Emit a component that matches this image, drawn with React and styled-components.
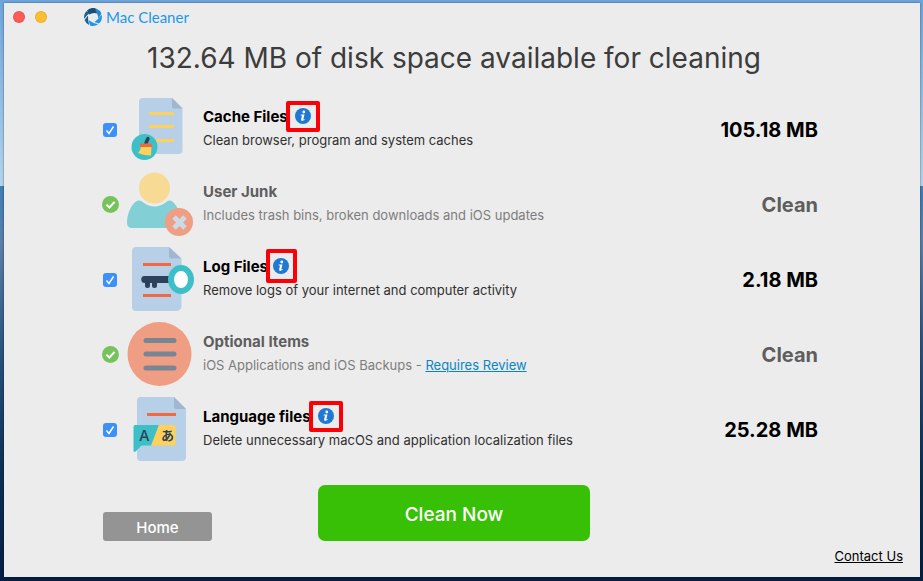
import React, { useState } from 'react';
import styled, { createGlobalStyle, css } from 'styled-components';

const GlobalStyle = createGlobalStyle`
  * {
    box-sizing: border-box;
  }

  body {
    margin: 0;
    font-family: Inter, 'Liberation Sans', sans-serif;
    color: #000;
  }
`;

const Desktop = styled.div`
  display: flex;
  min-height: 100vh;
  padding: 3px 3px 4px 4px;
  background: linear-gradient(
    to bottom,
    #6ea4dc 0,
    #b4d4ea 32%,
    #3f7eb8 32%,
    #5b7fa8 42%,
    #2c527e 60%,
    #0d3157 80%,
    #041f42 100%
  );
`;

const Window = styled.main`
  flex: 1;
  display: flex;
  flex-direction: column;
  background: #ececec;
  box-shadow: 0 0 2px rgba(0, 0, 0, 0.5);
`;

const TitleBar = styled.header`
  display: flex;
  align-items: center;
  height: 28px;
  padding-left: 9px;
`;

const WindowButton = styled.button`
  width: 12px;
  height: 12px;
  margin-right: 10px;
  padding: 0;
  border: 1px solid rgba(0, 0, 0, 0.08);
  border-radius: 50%;
  background: ${({ $color }) => $color};
`;

const Brand = styled.div`
  display: flex;
  align-items: center;
  gap: 4px;
  margin-left: 27px;
  font-family: Lato, sans-serif;
  font-size: 15px;
  color: #1d97ea;
`;

const Content = styled.section`
  padding: 0 102px 0 86px;
`;

const Heading = styled.h1`
  margin: 0;
  padding: 7px 0 14px;
  font-size: 28px;
  line-height: 40px;
  font-weight: 400;
  text-align: center;
  color: #3c3c3c;
`;

const List = styled.ul`
  margin: 0;
  padding: 0;
  list-style: none;
`;

const Row = styled.li`
  display: grid;
  grid-template-columns: 32px 68px 1fr auto;
  align-items: center;
  height: 75px;
  padding-left: 4px;
`;

const Status = styled.div`
  display: grid;
  place-items: center;

  > * {
    grid-area: 1 / 1;
  }

  svg {
    pointer-events: none;
  }
`;

const Checkbox = styled.input`
  appearance: none;
  width: 14px;
  height: 14px;
  margin: 0;
  border-radius: 3px;
  background: #3b90fb;

  &:not(:checked) {
    border: 1px solid #b0b0b0;
    background: #fff;
  }
`;

const Picture = styled.svg`
  display: block;
  width: 68px;
  height: 75px;
  opacity: ${({ $faded }) => ($faded ? 0.6 : 1)};
`;

const Info = styled.div`
  padding: 0 0 3px 9px;
`;

const NameLine = styled.div`
  display: flex;
  align-items: center;
  height: 24px;
`;

const Name = styled.label`
  font-size: 15px;
  font-weight: 700;
  color: ${({ $muted }) => ($muted ? '#5e5e5e' : '#000')};
`;

const Description = styled.p`
  margin: 0;
  font-size: 13px;
  line-height: 24px;
  color: ${({ $muted }) => ($muted ? '#7d7d7d' : '#303030')};
`;

const ReviewLink = styled.a`
  color: #0a84c8;
`;

const InfoButton = styled.button`
  display: grid;
  flex: none;
  place-items: center;
  width: 34px;
  height: 31px;
  margin-left: -2px;
  padding: 0;
  border: 4px solid #fb0007;
  border-radius: 2px;
  background: none;

  ${({ $tall }) =>
    $tall &&
    css`
      width: 31px;
      height: 34px;
    `}
`;

const Size = styled.strong`
  font-size: 20px;
  font-weight: 700;
  color: ${({ $muted }) => ($muted ? '#5e5e5e' : '#000')};
`;

const Actions = styled.div`
  display: grid;
  grid-template-columns: 1fr 272px 1fr;
  align-items: end;
  padding-top: 18px;
`;

const Button = styled.button`
  padding: 2px 0 0;
  border: 0;
  font-family: inherit;
  font-weight: 500;
  color: #fff;
`;

const HomeButton = styled(Button)`
  width: 109px;
  height: 29px;
  margin-left: 13px;
  border-radius: 3px;
  background: #949494;
  font-size: 15px;
`;

const CleanButton = styled(Button)`
  height: 56px;
  border-radius: 7px;
  background: #38c006;
  font-size: 19px;
`;

const Footer = styled.footer`
  display: flex;
  justify-content: flex-end;
  padding: 5px 17px 0 0;
  font-size: 13px;
  line-height: 20px;

  a {
    color: #000;
  }
`;

function Logo() {
  return (
    <svg width="18" height="18" viewBox="0 0 18 18" aria-hidden="true">
      <path d="M3 2.500A9 9 0 0 1 11.500.3L13.500 5.500Q9 4 5.200 6.500z" fill="#174f78" />
      <path d="M12.200.6a9 9 0 0 1 5.200 5.200L14.500 10.500Q13.500 5 11.500 3z" fill="#2387c9" />
      <path d="M17.700 6.800A9 9 0 0 1 15 15.500L10.500 14Q14 11.500 17.700 6.800z" fill="#1d97ea" />
      <path d="M14.200 16.200A9 9 0 0 1 6 17.400L4.600 12.300Q8.500 15 14.200 16.200z" fill="#1d97ea" />
      <path d="M5.100 17A9 9 0 0 1 .6 12L4 7.500Q3.800 12.500 5.100 17z" fill="#1c5f8f" />
      <path d="M.2 10.800A9 9 0 0 1 2.300 3.200L7 4.600Q3 6.500.2 10.800z" fill="#1c5f8f" />
    </svg>
  );
}

function InfoIcon() {
  return (
    <svg width="16" height="16" viewBox="0 0 16 16" aria-hidden="true">
      <circle cx="8" cy="8" r="8" fill="#1f78d1" />
      <circle cx="8.800" cy="4" r="1.400" fill="#fff" />
      <path d="M5.800 6.400h3.700L8.300 11.300q.3.400 1.400-.2l-.2 1Q5.900 14 6.100 11.500L7 7.500H5.600z" fill="#fff" />
    </svg>
  );
}

function DoneIcon() {
  return (
    <svg width="17" height="17" viewBox="0 0 17 17" aria-label="Clean">
      <circle cx="8.500" cy="8.500" r="8.500" fill="#77c35b" />
      <path d="M4.400 8.600l3 2.900 5.200-5.600" fill="none" stroke="#fff" strokeWidth="2" />
    </svg>
  );
}

// All of the pictures share the same 68x75 canvas as their row
const pictures = {
  cache: (
    <>
      <path d="M17 6h29l10.500 10v42a4 4 0 0 1-4 4H17a4 4 0 0 1-4-4V10a4 4 0 0 1 4-4z" fill="#b7cfe7" />
      <path d="M46 6l10.500 10.500H48a2 2 0 0 1-2-2z" fill="#9fb7d0" />
      <path d="M23 21.500h25M23 34.500h25M23 48.500h25" stroke="#ffd15b" strokeWidth="3" />
      <circle cx="18.500" cy="55" r="13" fill="#3dbfc8" />
      <path d="M20 51l2-4.500" stroke="#2c4259" strokeWidth="3.500" strokeLinecap="round" />
      <path d="M15 54.500h10.500l-.5 9q-7 0-13-2.500 2.500-2 3-6.500z" fill="#ffd15b" />
      <path d="M14 51.500h12v3.500H14z" fill="#f2693f" />
    </>
  ),
  junk: (
    <>
      <circle cx="28.500" cy="21" r="15.500" fill="#ffd15b" />
      <path d="M10 34.500q3-2 6 0 12.500 10 25 0 3-2 6 .5Q55 42 55 61H6c-3 0-5-2-5-5 0-9 4-18 9-21.500z" fill="#3dbfc8" />
      <circle cx="53" cy="55" r="14" fill="#f2693f" />
      <path d="M48 50l11 11M59 50L48 61" stroke="#b7cfe7" strokeWidth="5" />
    </>
  ),
  log: (
    <>
      <path d="M10 5h33l12.500 12v47a5 5 0 0 1-5 5H10a4 4 0 0 1-4-4V9a4 4 0 0 1 4-4z" fill="#b7cfe7" />
      <path d="M43 5l12.500 11.500H45a2 2 0 0 1-2-2z" fill="#9fb7d0" />
      <path d="M17 22.500h28M17 53.500h28" stroke="#f2693f" strokeWidth="3" />
      <path d="M18.500 34H44v7H31v2.500a2 2 0 0 1-5 0V41h-2v2.500a2 2 0 0 1-5 0V41a3.500 3.500 0 0 1-.5-7z" fill="#2c4259" />
      <ellipse cx="55" cy="37.500" rx="10" ry="11.500" fill="#fff" stroke="#3dbfc8" strokeWidth="6" />
    </>
  ),
  optional: (
    <>
      <circle cx="33.500" cy="37" r="32" fill="#f2693f" />
      <path d="M20 23.500h28M20 37h28M20 51h28" stroke="#2c4259" strokeWidth="5" strokeLinecap="round" />
    </>
  ),
  language: (
    <>
      <path d="M15 5h33l12 12v48a4 4 0 0 1-4 4H15a4 4 0 0 1-4-4V9a4 4 0 0 1 4-4z" fill="#b7cfe7" />
      <path d="M48 5l12 12H50a2 2 0 0 1-2-2z" fill="#9fb7d0" />
      <path d="M21 22.500h29" stroke="#f2693f" strokeWidth="3" />
      <path d="M9 33h24l-7 20.500H15.500L9 60q-1.500 0-1.500-1.500v-24Q7.500 33 9 33z" fill="#3dbfc8" />
      <path d="M33 33h15.500l1 1v18.500l-1 1H25z" fill="#ffd15b" />
      <text x="13" y="49" fontFamily="Inter" fontSize="15" fontWeight="500" fill="#2c4259">A</text>
      <text x="35" y="48" fontFamily="Noto Sans CJK JP" fontSize="13" fontWeight="700" fill="#2c4259">あ</text>
    </>
  ),
};

const items = [
  { id: 'cache', name: 'Cache Files', description: 'Clean browser, program and system caches', size: '105.18 MB' },
  { id: 'junk', name: 'User Junk', description: 'Includes trash bins, broken downloads and iOS updates' },
  { id: 'log', name: 'Log Files', description: 'Remove logs of your internet and computer activity', size: '2.18 MB', tall: true },
  { id: 'optional', name: 'Optional Items', description: 'iOS Applications and iOS Backups - ', review: true },
  { id: 'language', name: 'Language files', description: 'Delete unnecessary macOS and application localization files', size: '25.28 MB' },
];

function CleanItem({ item }) {
  const [checked, setChecked] = useState(true);
  const clean = !item.size;

  return (
    <Row>
      <Status>
        {clean ? (
          <DoneIcon />
        ) : (
          <>
            <Checkbox
              type="checkbox"
              id={item.id}
              checked={checked}
              onChange={(e) => setChecked(e.target.checked)}
            />
            {checked && (
              <svg width="14" height="14" viewBox="0 0 14 14" aria-hidden="true">
                <path d="M3.500 7.500l2.500 3 4.500-7" fill="none" stroke="#fff" strokeWidth="1.500" />
              </svg>
            )}
          </>
        )}
      </Status>
      <Picture viewBox="0 0 68 75" $faded={clean} aria-hidden="true">
        {pictures[item.id]}
      </Picture>
      <Info>
        <NameLine>
          <Name as={clean ? 'span' : 'label'} htmlFor={clean ? undefined : item.id} $muted={clean}>
            {item.name}
          </Name>
          {!clean && (
            <InfoButton type="button" $tall={item.tall} aria-label={`About ${item.name}`}>
              <InfoIcon />
            </InfoButton>
          )}
        </NameLine>
        <Description $muted={clean}>
          {item.description}
          {item.review && <ReviewLink href="#review">Requires Review</ReviewLink>}
        </Description>
      </Info>
      <Size $muted={clean}>{item.size || 'Clean'}</Size>
    </Row>
  );
}

function App() {
  return (
    <>
      <GlobalStyle />
      <Desktop>
        <Window>
          <TitleBar>
            <WindowButton type="button" $color="#fc5b57" aria-label="Close" />
            <WindowButton type="button" $color="#fdbf2f" aria-label="Minimize" />
            <Brand>
              <Logo />
              Mac Cleaner
            </Brand>
          </TitleBar>
          <Content>
            <Heading>132.64 MB of disk space available for cleaning</Heading>
            <List>
              {items.map((item) => (
                <CleanItem key={item.id} item={item} />
              ))}
            </List>
            <Actions>
              <HomeButton type="button">Home</HomeButton>
              <CleanButton type="button">Clean Now</CleanButton>
            </Actions>
          </Content>
          <Footer>
            <a href="#contact">Contact Us</a>
          </Footer>
        </Window>
      </Desktop>
    </>
  );
}

export default App;
